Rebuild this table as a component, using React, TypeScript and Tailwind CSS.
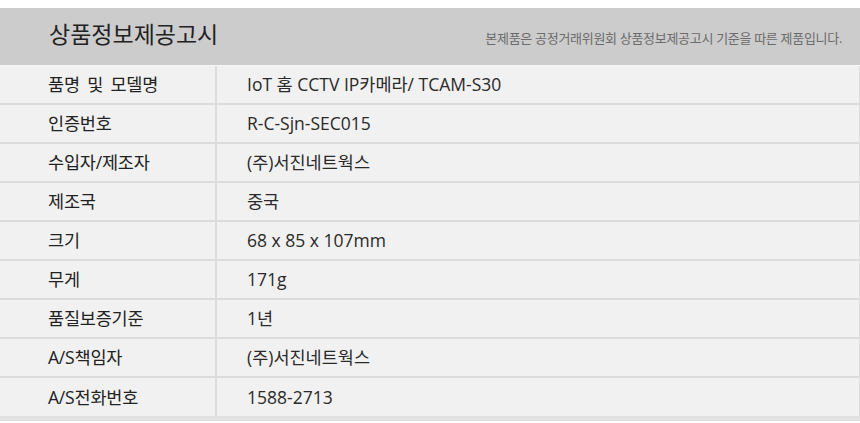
import React from "react";

const rows: [string, string][] = [
  ["품명 및 모델명", "IoT 홈 CCTV IP카메라/ TCAM-S30"],
  ["인증번호", "R-C-Sjn-SEC015"],
  ["수입자/제조자", "(주)서진네트웍스"],
  ["제조국", "중국"],
  ["크기", "68 x 85 x 107mm"],
  ["무게", "171g"],
  ["품질보증기준", "1년"],
  ["A/S책임자", "(주)서진네트웍스"],
  ["A/S전화번호", "1588-2713"],
];

export default function App() {
  return (
    <div
      className="w-[860px] h-[423px] bg-white pt-[8px] overflow-hidden"
      style={{ fontFamily: '"Open Sans", "Noto Sans CJK KR", sans-serif' }}
    >
      <div className="h-[57px] bg-[#cccccc] flex items-center justify-between pl-[49px] pr-[18px]">
        <div className="text-[23px] text-[#222] tracking-[0px] leading-none mb-[4px]">상품정보제공고시</div>
        <div className="text-[13px] text-[#6b6b6b] tracking-[-0.3px] leading-none mt-[4px]">
          본제품은 공정거래위원회 상품정보제공고시 기준을 따른 제품입니다.
        </div>
      </div>
      <div className="border-t border-[#f7f7f7] bg-[#e2e2e2] pb-[5px]">
        {rows.map(([k, v], i) => (
          <div
            key={i}
            className="flex h-[39px] bg-[#f1f1f1] border-b-[2px] border-[#dcdcdc] border-r border-r-[#dcdcdc] last:border-b-0 last:h-[38px]"
          >
            <div className="w-[217px] shrink-0 border-r-[2px] border-[#dcdcdc] flex items-center pl-[48px] text-[17.5px] text-[#222] tracking-[-0.2px] [word-spacing:3px]">
              {k}
            </div>
            <div className="flex-1 flex items-center pl-[30px] text-[17.5px] text-[#2a2a2a] tracking-[0px]">
              {v}
            </div>
          </div>
        ))}
      </div>
    </div>
  );
}
